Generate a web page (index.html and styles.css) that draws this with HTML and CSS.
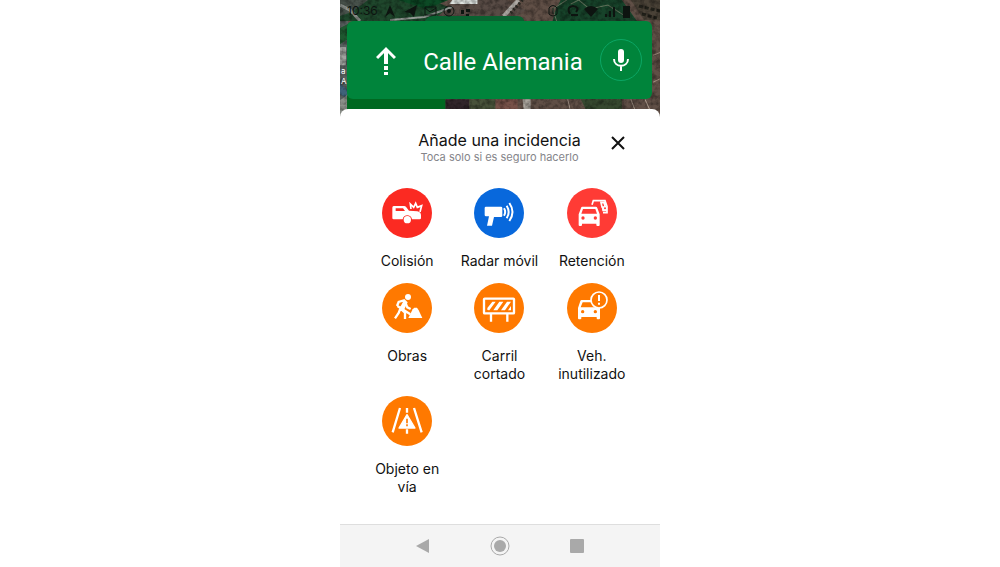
FILE: index.html
```
<!DOCTYPE html>
<html lang="es">
<head>
    <meta charset="UTF-8">
    <meta name="viewport" content="width=device-width, initial-scale=1.0">
    <title>Añade una incidencia</title>
    <link rel="stylesheet" href="styles.css">
</head>
<body>
    <div class="phone">
        <!-- Map and direction banner -->
        <header class="map">
            <svg class="map-picture" viewBox="0 0 319 119" preserveAspectRatio="xMidYMin slice" aria-hidden="true">
                <filter id="ground" x="0" y="0" width="100%" height="100%">
                    <feTurbulence type="fractalNoise" baseFrequency="0.2" numOctaves="3" seed="4"/>
                    <feColorMatrix values="0 0 0 0 0  0 0 0 0 0  0 0 0 0 0  0 2.4 0 0 -0.9"/>
                </filter>
                <rect width="320" height="119" fill="#604f46"/>
                <path d="M0 0H92L112 9 88 21H0z" fill="#1f472c"/>
                <path d="M0 0H28L12 12 0 16z" fill="#48524b"/>
                <path d="M0 5 10 10 20 21" fill="none" stroke="#8c928d" stroke-width="3"/>
                <path d="M58 0H108L86 9z" fill="#0c4a25"/>
                <path d="M116 0H166L185 10 168 21H92z" fill="#584b45"/>
                <path d="M112 0H137V4H109z" fill="#dfe4e1"/>
                <path d="M50 20 84 17 112 7" fill="none" stroke="#949b96" stroke-width="2"/>
                <path d="M220 0H281L296 21H212L215 10z" fill="#17432a"/>
                <path d="M226 0 212 9 216 21M230 4 238 0 249 9 267 5 286 17" fill="none" stroke="#63745d" stroke-width="1"/>
                <path d="M290 0H320V20H303z" fill="#4a4237"/>
                <path d="M298 6 319 11M301 14 316 18" stroke="#22211a" stroke-width="3" stroke-dasharray="4 2"/>
                <path d="M163 16 178 0" fill="none" stroke="#b2aea8" stroke-width="4"/>
                <path d="M170 13 182 0" fill="none" stroke="#2c2b24" stroke-width="3" stroke-dasharray="2 2"/>
                <path d="M0 21H8V119H0z" fill="#58605f"/>
                <path d="M0 28 8 24V39L0 44z" fill="#1f5730"/>
                <path d="M0 47H6V65H0z" fill="#a0a29f"/>
                <path d="M0 83 8 90V99L0 94z" fill="#3f6279"/>
                <path d="M0 100 8 94V119H0z" fill="#8d918b"/>
                <path d="M312 55 320 52M312 82 320 78" stroke="#a18b7d" stroke-width="1"/>
                <path d="M105 99H129V119H105z" fill="#31252a"/>
                <path d="M129 99H155V119H129z" fill="#48523a"/>
                <path d="M155 99H177V119H155z" fill="#765148"/>
                <path d="M182 99H190V119H184z" fill="#aaa59d"/>
                <path d="M240 99H281V119H250z" fill="#36482f"/>
                <path d="M227 99 230 112M290 99 295 112M304 99 310 112" stroke="#af9e90" stroke-width="1"/>
                <rect width="320" height="119" filter="url(#ground)" opacity=".35"/>
                <path d="M84 22Q87 16 93 16H177Q183 16 184 22z" fill="#086230"/>
                <path d="M7 95H105V119H7z" fill="#006821"/>
            </svg>
            <div class="status">
                <span class="status-time">10:36</span>
                <svg class="status-icons" viewBox="0 0 90 16" aria-hidden="true">
                    <path d="M1 14 6 2 11 14 6 10z M20 9 33 2 30 14 26 10z"/>
                    <path d="M41 4H52V12H41z M41 5 46 9 52 5" fill="none" stroke="#0d1410" stroke-width="1"/>
                    <circle cx="65" cy="8" r="5" fill="none" stroke="#0d1410" stroke-width="1"/>
                    <circle cx="65" cy="8" r="2"/>
                    <path d="M77 7h3v4h-3z M82 6h4v3h-4z M82 11h3v2h-3z"/>
                </svg>
                <svg class="status-icons status-right" viewBox="0 0 90 16" aria-hidden="true">
                    <path d="M1 5Q5 0 9 5V11Q5 15 1 11zM5 5V11" fill="none" stroke="#0d1410" stroke-width="1"/>
                    <path d="M22 11Q18 4 25 3Q32 4 28 9M23 12H30" fill="none" stroke="#0d1410" stroke-width="2"/>
                    <path d="M36 6Q43 0 50 6L43 14z M57 11h2v3h-2z M61 8h2v6h-2z M65 4h2v10h-2z M75 3h7v12h-7z"/>
                </svg>
            </div>
            <span class="map-label">a<br>A</span>
            <div class="banner">
                <svg class="banner-arrow" viewBox="0 0 20 30" aria-hidden="true">
                    <path d="M10 18V4M1 12 10 3 19 12" fill="none" stroke="#fff" stroke-width="3"/>
                    <path d="M8 4h4v14H8z M8 20h4v4H8z M8 26h4v3H8z" fill="#fff"/>
                </svg>
                <h1>Calle Alemania</h1>
                <button class="mic" type="button" aria-label="Buscar por voz">
                    <svg viewBox="0 0 18 24" aria-hidden="true">
                        <rect x="6" y="1" width="6" height="14" rx="3" fill="#fff"/>
                        <path d="M2 11C2 20 16 20 16 11M9 18V23" fill="none" stroke="#fff" stroke-width="2"/>
                    </svg>
                </button>
            </div>
        </header>

        <!-- Incident sheet -->
        <main class="sheet">
            <div class="sheet-header">
                <div class="sheet-title">
                    <h2>Añade una incidencia</h2>
                    <p>Toca solo si es seguro hacerlo</p>
                </div>
                <button class="close" type="button" aria-label="Cerrar">
                    <svg viewBox="0 0 24 24" aria-hidden="true">
                        <path d="M6 6 18 18M18 6 6 18" stroke="#111" stroke-width="2"/>
                    </svg>
                </button>
            </div>

            <div class="grid">
                <button class="incident" type="button">
                    <svg class="red" viewBox="22 22 150 150" aria-hidden="true">
                        <path fill="#fff" fill-rule="evenodd" d="M57 76H88Q92 76 95 80L103 90 128 92Q138 94 139 103V112Q139 116 135 116H112C110 100 86 100 84 116H57Q53 116 53 112V81Q53 76 57 76zM63 83V91H91L85 83z"/>
                        <circle cx="98" cy="117" r="11" fill="#fff"/>
                        <path d="M109 85 107 70 117 80 123 68 128 80 141 75 136 94" fill="none" stroke="#fff" stroke-width="5"/>
                    </svg>
                    <span>Colisión</span>
                </button>
                <button class="incident" type="button">
                    <svg class="blue" viewBox="22 22 150 150" aria-hidden="true">
                        <path fill="#fff" d="M58 78H103Q107 78 107 82V105Q107 109 103 109H82L76 135H61L67 107H58Q54 107 54 103V82Q54 78 58 78z"/>
                        <path d="M112 83Q119 94 112 105M120 75Q132 94 120 113M128 67Q147 94 128 121" fill="none" stroke="#fff" stroke-width="6"/>
                    </svg>
                    <span>Radar móvil</span>
                </button>
                <button class="incident" type="button">
                    <svg class="coral" viewBox="22 22 150 150" aria-hidden="true">
                        <path d="M97 72 101 60H136L142 77V96H130M124 66H133L137 79H127z" fill="none" stroke="#fff" stroke-width="5"/>
                        <path fill="#fff" d="M126 78H142V92H128z"/>
                        <path fill="#fff" fill-rule="evenodd" d="M68 78H108Q112 78 113 82L120 101V133Q120 136 117 136H113Q110 136 110 133V129H67V133Q67 136 64 136H60Q57 136 57 133V101L64 82Q65 78 68 78zM70 85 65 99H112L107 85z"/>
                        <circle cx="70" cy="112" r="5" fill="#ff3b35"/>
                        <circle cx="107" cy="112" r="5" fill="#ff3b35"/>
                        <circle cx="136" cy="83" r="3" fill="#ff3b35"/>
                    </svg>
                    <span>Retención</span>
                </button>
                <button class="incident" type="button">
                    <svg class="orange" viewBox="22 22 150 150" aria-hidden="true">
                        <circle cx="100" cy="64" r="9" fill="#fff"/>
                        <path d="M91 73 72 79 67 91M91 75 78 99 91 111V130M77 99 72 112 61 128M92 80 98 95 108 100M68 91 107 116" fill="none" stroke="#fff" stroke-width="7"/>
                        <path d="M91 72 99 80 88 103 78 98z" fill="#fff"/>
                        <path d="M101 127 114 101 119 96H127L132 104 143 127z" fill="#fff"/>
                    </svg>
                    <span>Obras</span>
                </button>
                <button class="incident" type="button">
                    <svg class="orange" viewBox="22 22 150 150" aria-hidden="true">
                        <rect x="52" y="69" width="90" height="44" rx="2" fill="none" stroke="#fff" stroke-width="7"/>
                        <path d="M62 103V97L77 78H87L68 104zM80 104 98 78H110L92 104zM103 104 121 78H133L115 104zM124 104 133 91V104z" fill="#fff"/>
                        <path d="M73 114V138M122 114V138" stroke="#fff" stroke-width="7"/>
                    </svg>
                    <span>Carril cortado</span>
                </button>
                <button class="incident" type="button">
                    <svg class="orange" viewBox="22 22 150 150" aria-hidden="true">
                        <path fill="#fff" fill-rule="evenodd" d="M64 73H112L121 96V128Q121 131 118 131H114Q111 131 111 128V124H65V128Q65 131 62 131H58Q55 131 55 128V97L62 76Q63 73 66 73zM69 80 63 95H111L107 80z"/>
                        <circle cx="69" cy="108" r="5" fill="#ff7900"/>
                        <circle cx="107" cy="108" r="5" fill="#ff7900"/>
                        <circle cx="118" cy="73" r="24" fill="#ff7900" stroke="#fff" stroke-width="5"/>
                        <path d="M118 58V76M118 81V87" stroke="#fff" stroke-width="6"/>
                    </svg>
                    <span>Veh. inutilizado</span>
                </button>
                <button class="incident" type="button">
                    <svg class="orange" viewBox="22 22 150 150" aria-hidden="true">
                        <path d="M76 58 54 131M118 58 141 131M97 58V72M97 122V135" fill="none" stroke="#fff" stroke-width="7"/>
                        <path d="M97 78 121 118H73z" fill="#fff" stroke="#fff" stroke-width="4" stroke-linejoin="round"/>
                        <path d="M97 90V104M97 107V113" stroke="#ff7900" stroke-width="5"/>
                    </svg>
                    <span>Objeto en vía</span>
                </button>
            </div>
        </main>

        <!-- System navigation -->
        <nav class="nav">
            <button type="button" aria-label="Atrás">
                <svg viewBox="0 0 20 20" aria-hidden="true"><path d="M3 10 16 3V17z" fill="#a9a9a9"/></svg>
            </button>
            <button type="button" aria-label="Inicio">
                <svg viewBox="0 0 20 20" aria-hidden="true">
                    <circle cx="10" cy="10" r="9" fill="none" stroke="#a9a9a9" stroke-width="1"/>
                    <circle cx="10" cy="10" r="6" fill="#a9a9a9"/>
                </svg>
            </button>
            <button type="button" aria-label="Recientes">
                <svg viewBox="0 0 20 20" aria-hidden="true"><rect x="3" y="3" width="14" height="14" rx="1" fill="#a9a9a9"/></svg>
            </button>
        </nav>
    </div>
</body>
</html>
```
FILE: styles.css
```
* {
    margin: 0;
    padding: 0;
    box-sizing: border-box;
}

body {
    font-family: Inter, sans-serif;
    background: #fff;
    color: #111;
}

button {
    border: none;
    background: none;
    font: inherit;
    color: inherit;
    cursor: pointer;
}

svg {
    display: block;
}

.phone {
    display: flex;
    flex-direction: column;
    width: 32%;
    min-width: 300px;
    min-height: 100vh;
    margin: 0 auto;
}

/* Map and banner */
.map {
    position: relative;
    padding: 0 8px 20px 7px;
    overflow: hidden;
}

.map-picture {
    position: absolute;
    top: 0;
    left: 0;
    width: 100%;
    height: 100%;
}

.status {
    position: relative;
    display: flex;
    align-items: center;
    gap: 6px;
    height: 21px;
    color: #0d1410;
    font-size: 12px;
}

.status-icons {
    width: 90px;
    height: 16px;
    fill: #0d1410;
}

.status-right {
    margin-left: auto;
    margin-right: 14px;
}

.map-label {
    position: absolute;
    top: 66px;
    left: 1px;
    color: #fff;
    font-size: 8px;
    line-height: 10px;
}

.banner {
    position: relative;
    display: flex;
    align-items: center;
    justify-content: space-between;
    padding: 18px 10px 18px 29px;
    border-radius: 6px;
    background: #00843b;
    color: #fff;
}

.banner-arrow {
    width: 20px;
    height: 30px;
    margin-top: 2px;
}

.banner h1 {
    margin-left: 10px;
    padding-top: 4px;
    font-family: Roboto, sans-serif;
    font-size: 24px;
    font-weight: 400;
    line-height: 32px;
}

.mic {
    display: flex;
    align-items: center;
    justify-content: center;
    width: 42px;
    height: 42px;
    border: 1px solid #0ba765;
    border-radius: 50%;
}

.mic svg {
    width: 18px;
    height: 24px;
}

/* Incident sheet */
.sheet {
    position: relative;
    flex: 1;
    margin-top: -10px;
    padding: 22px 22px 28px 21px;
    border-radius: 8px 8px 0 0;
    background: #fff;
}

.sheet-header {
    display: grid;
    grid-template-columns: 1fr auto 1fr;
    align-items: start;
    column-gap: 25px;
    margin-bottom: 23px;
}

.sheet-title {
    grid-column: 2;
    text-align: center;
}

.sheet-title h2 {
    font-size: 16px;
    font-weight: 400;
    line-height: 18px;
}

.sheet-title p {
    color: #85858a;
    font-size: 11px;
    line-height: 16px;
}

.close {
    width: 24px;
    height: 24px;
}

.grid {
    display: grid;
    grid-template-columns: repeat(3, 1fr);
    row-gap: 13px;
}

.incident {
    display: flex;
    flex-direction: column;
    align-items: center;
    gap: 14px;
    padding: 0 4px;
    font-size: 14px;
    line-height: 18px;
}

.incident svg {
    width: 50px;
    height: 50px;
    border-radius: 50%;
}

.red {
    background: #fb2a22;
}

.blue {
    background: #0868dc;
}

.coral {
    background: #ff3b35;
}

.orange {
    background: #ff7900;
}

/* System navigation */
.nav {
    display: flex;
    align-items: center;
    justify-content: space-around;
    padding: 11px 45px 11px 44px;
    border-top: 1px solid #dedede;
    background: #f4f4f4;
}

.nav svg {
    width: 20px;
    height: 20px;
}
```
